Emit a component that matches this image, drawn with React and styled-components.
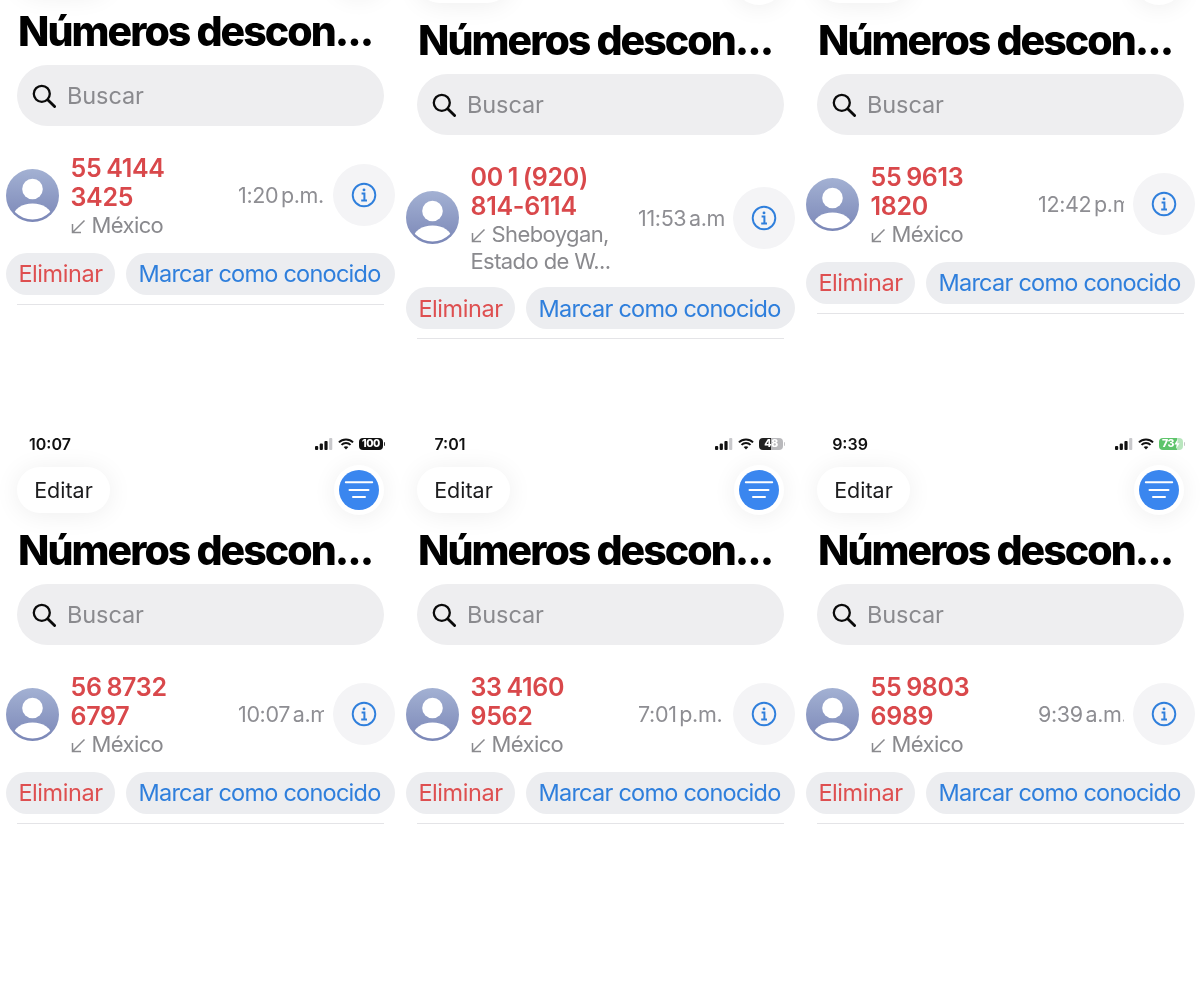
import React from "react";
import styled, { createGlobalStyle } from "styled-components";

const Global = createGlobalStyle`
  html, body { margin: 0; padding: 0; background: #fff; }
  body { font-family: Inter, "Liberation Sans", sans-serif; -webkit-font-smoothing: antialiased; }
  * { box-sizing: border-box; }
`;

const Page = styled.div`
  width: 1200px;
  height: 986px;
  overflow: hidden;
  display: grid;
  grid-template-columns: repeat(3, 400px);
  grid-template-rows: 425px 561px;
  filter: blur(0.35px);
`;

const Screen = styled.section`
  overflow: hidden;
  height: 100%;
`;

const Inner = styled.div`
  margin-top: ${(p) => p.$top}px;
  display: flex;
  flex-direction: column;
`;

const StatusBar = styled.div`
  height: 42px;
  padding: 11px 15px 0 0;
  display: flex;
  justify-content: space-between;
  align-items: flex-start;
`;

const Clock = styled.span`
  width: 100px;
  text-align: center;
  font-size: 16px;
  line-height: 16px;
  font-weight: 600;
  color: #111;
`;

const StatusIcons = styled.div`
  display: flex;
  align-items: center;
  gap: 5px;
  height: 16px;
`;

const Battery = styled.span`
  position: relative;
  width: 24px;
  height: 12px;
  border-radius: 4px;
  background: ${(p) => `linear-gradient(90deg, ${p.$color} ${p.$level}%, ${p.$rest} ${p.$level}%)`};
  color: #fff;
  font-size: 10.5px;
  font-weight: 800;
  line-height: 12px;
  letter-spacing: -0.4px;
  display: flex;
  justify-content: center;
  align-items: center;
  margin-right: 2px;
  &::after {
    content: "";
    position: absolute;
    right: -2px;
    top: 4px;
    width: 1.5px;
    height: 4px;
    border-radius: 0 2px 2px 0;
    background: ${(p) => (p.$level >= 100 ? "#333" : "#c4c4c6")};
  }
`;

const Toolbar = styled.div`
  height: 46px;
  padding: 0 16px 0 17px;
  display: flex;
  justify-content: space-between;
  align-items: center;
`;

const EditPill = styled.div`
  width: 93px;
  height: 46px;
  border-radius: 23px;
  background: #fff;
  box-shadow: 0 2px 26px rgba(0, 0, 0, 0.07);
  display: flex;
  align-items: center;
  justify-content: center;
  font-size: 21.5px;
  color: #1c1c1e;
`;

const MenuButton = styled.div`
  width: 50px;
  height: 50px;
  border-radius: 50%;
  background: #fff;
  box-shadow: 0 2px 24px rgba(0, 0, 0, 0.07);
  display: flex;
  align-items: center;
  justify-content: center;
`;

const MenuDisc = styled.div`
  width: 40px;
  height: 40px;
  border-radius: 50%;
  background: #3a86ef;
  display: flex;
  align-items: center;
  justify-content: center;
`;

const Title = styled.h1`
  margin: 17px 0 0 18px;
  font-size: 41px;
  line-height: 40px;
  font-weight: 800;
  letter-spacing: -1.95px;
  color: #000;
  white-space: nowrap;
`;

const Search = styled.div`
  margin: 14px 16px 0 17px;
  height: 61px;
  border-radius: 30.5px;
  background: #eeeef0;
  display: flex;
  align-items: center;
  gap: 11px;
  padding-left: 15px;
  font-size: 23.5px;
  letter-spacing: -0.1px;
  color: #8a8a8e;
`;

const Entry = styled.div`
  margin-top: 25px;
  padding: 0 5px 0 6px;
  display: flex;
  align-items: center;
`;

const Avatar = styled.svg`
  width: 53px;
  height: 53px;
  flex: none;
`;

const Who = styled.div`
  width: 167.5px;
  flex: none;
  margin-left: 11.5px;
  padding-top: 3px;
`;

const PhoneNumber = styled.div`
  font-size: 25px;
  line-height: 29px;
  font-weight: 600;
  letter-spacing: -0.3px;
  word-spacing: -1.2px;
  color: #d9484b;
`;

const Place = styled.div`
  font-size: 22px;
  line-height: 27px;
  letter-spacing: -0.6px;
  color: #8a8a8e;
  svg { margin-right: 6px; vertical-align: -1px; }
`;

const Time = styled.div`
  width: 86px;
  flex: none;
  overflow: hidden;
  white-space: nowrap;
  font-size: 21.5px;
  line-height: 28px;
  letter-spacing: -0.35px;
  color: #8e8e93;
  word-spacing: -3px;
`;

const InfoButton = styled.div`
  width: 62px;
  height: 62px;
  flex: none;
  margin-left: 9px;
  border-radius: 50%;
  background: #f4f4f6;
  display: flex;
  align-items: center;
  justify-content: center;
`;

const Actions = styled.div`
  margin-top: ${(p) => p.$gap}px;
  padding: 0 5px 0 6px;
  display: flex;
  gap: 11px;
`;

const Action = styled.div`
  height: 42px;
  border-radius: 21px;
  background: #ecedf0;
  display: flex;
  align-items: center;
  justify-content: center;
  font-size: 23.5px;
  letter-spacing: ${(p) => (p.$grow ? "-0.75px" : "-0.45px")};
  padding-right: ${(p) => (p.$grow ? "2px" : "0")};
  color: ${(p) => p.$color};
  flex: ${(p) => (p.$grow ? "1" : "none")};
  width: ${(p) => (p.$grow ? "auto" : "109px")};
`;

const Divider = styled.div`
  margin: 9px 16px 0 17px;
  height: 1px;
  background: #e4e4e7;
`;

const SearchIcon = () => (
  <svg width="24" height="24" viewBox="0 0 24 24" fill="none" stroke="#0a0a0a" strokeWidth="2.3" strokeLinecap="round">
    <circle cx="9.8" cy="9.8" r="8" />
    <path d="M15.7 15.7 22.6 22.6" strokeWidth="2.8" />
  </svg>
);

const AvatarIcon = ({ id }) => (
  <Avatar viewBox="0 0 53 53">
    <defs>
      <linearGradient id={id} x1="0" y1="0" x2="0" y2="1">
        <stop offset="0" stopColor="#a3b1d3" />
        <stop offset="1" stopColor="#7b87b7" />
      </linearGradient>
      <clipPath id={id + "c"}>
        <circle cx="26.5" cy="26.5" r="24" />
      </clipPath>
    </defs>
    <circle cx="26.5" cy="26.5" r="26.5" fill={`url(#${id})`} />
    <circle cx="26.5" cy="20" r="10.3" fill="#fff" />
    <ellipse cx="26.5" cy="47" rx="19" ry="12.5" fill="#fff" clipPath={`url(#${id}c)`} />
  </Avatar>
);

const InfoIcon = () => (
  <svg width="26" height="26" viewBox="0 0 26 26" fill="none" stroke="#2f7fdc">
    <circle cx="13" cy="13" r="11.3" strokeWidth="1.9" />
    <circle cx="13" cy="7.9" r="1.45" fill="#2f7fdc" stroke="none" />
    <path d="M10.6 11.4H13.4V18.4M10.2 18.6H16" strokeWidth="2" />
  </svg>
);

const ArrowIcon = () => (
  <svg width="15" height="15" viewBox="0 0 15 15" fill="none" stroke="#8a8a8e" strokeWidth="1.5">
    <path d="M13.5 1.5 1.5 13.5M1.5 5V13.5H10" />
  </svg>
);

const MenuIcon = () => (
  <svg width="32" height="22" viewBox="0 0 32 22" fill="none" stroke="#fff" strokeWidth="2" strokeLinecap="round">
    <path d="M2.8 3.3H29.2M6.5 11H25.5M10 18H22" />
  </svg>
);

const SignalIcon = () => (
  <svg width="18" height="12" viewBox="0 0 18 12">
    <rect x="0" y="8" width="3.2" height="4" rx="1" fill="#111" />
    <rect x="4.7" y="5.6" width="3.2" height="6.4" rx="1" fill="#111" />
    <rect x="9.4" y="3" width="3.2" height="9" rx="1" fill="#111" />
    <rect x="14.1" y="0" width="3.2" height="12" rx="1" fill="#c9c9cc" />
  </svg>
);

const WifiIcon = () => (
  <svg width="16" height="12" viewBox="0 0 17 12" fill="none" stroke="#111" strokeWidth="2">
    <path d="M1 4.3C5 .2 12 .2 16 4.3" />
    <path d="M3.7 7C6.3 4.3 10.7 4.3 13.3 7" />
    <path d="M8.5 11.8 6 9.3C7.3 8 9.7 8 11 9.3Z" fill="#111" stroke="none" />
  </svg>
);

const BoltIcon = () => (
  <svg width="6" height="10" viewBox="0 0 6 10" fill="#fff">
    <path d="M3.8 0 .4 5.6H2.6L2 10 5.6 4.2H3.3Z" />
  </svg>
);

const tops = [
  { id: "a", top: -52, number: ["55 4144", "3425"], place: ["México"], time: "1:20 p.m.", gap: 13.5 },
  { id: "b", top: -43, number: ["00 1 (920)", "814-6114"], place: ["Sheboygan,", "Estado de W..."], time: "11:53 a.m.", gap: 12 },
  { id: "c", top: -43, number: ["55 9613", "1820"], place: ["México"], time: "12:42 p.m.", gap: 13.5 },
];

const bottoms = [
  { id: "d", clock: "10:07", level: 100, color: "#111", rest: "#111", label: "100", number: ["56 8732", "6797"], place: ["México"], time: "10:07 a.m.", gap: 13.5 },
  { id: "e", clock: "7:01", level: 48, color: "#222", rest: "#b9b9bc", label: "48", number: ["33 4160", "9562"], place: ["México"], time: "7:01 p.m.", gap: 13.5 },
  { id: "f", clock: "9:39", level: 73, color: "#5ec46b", rest: "#b9e6be", label: "73", bolt: true, number: ["55 9803", "6989"], place: ["México"], time: "9:39 a.m.", gap: 13.5 },
];

const Body = ({ s }) => (
  <>
    <Toolbar>
      <EditPill>Editar</EditPill>
      <MenuButton>
        <MenuDisc>
          <MenuIcon />
        </MenuDisc>
      </MenuButton>
    </Toolbar>
    <Title>Números descon...</Title>
    <Search>
      <SearchIcon />
      Buscar
    </Search>
    <Entry>
      <AvatarIcon id={s.id} />
      <Who>
        {s.number.map((n) => (
          <PhoneNumber key={n}>{n}</PhoneNumber>
        ))}
        {s.place.map((t, i) => (
          <Place key={t}>
            {i === 0 && <ArrowIcon />}
            {t}
          </Place>
        ))}
      </Who>
      <Time>{s.time}</Time>
      <InfoButton>
        <InfoIcon />
      </InfoButton>
    </Entry>
    <Actions $gap={s.gap}>
      <Action $color="#de4f50">Eliminar</Action>
      <Action $grow $color="#2f7fdc">Marcar como conocido</Action>
    </Actions>
    <Divider />
  </>
);

export default function App() {
  return (
    <Page>
      <Global />
      {tops.map((s) => (
        <Screen key={s.id}>
          <Inner $top={s.top}>
            <Body s={s} />
          </Inner>
        </Screen>
      ))}
      {bottoms.map((s) => (
        <Screen key={s.id}>
          <Inner $top={0}>
            <StatusBar>
              <Clock>{s.clock}</Clock>
              <StatusIcons>
                <SignalIcon />
                <WifiIcon />
                <Battery $level={s.level} $color={s.color} $rest={s.rest}>
                  {s.label}
                  {s.bolt && <BoltIcon />}
                </Battery>
              </StatusIcons>
            </StatusBar>
            <Body s={s} />
          </Inner>
        </Screen>
      ))}
    </Page>
  );
}
